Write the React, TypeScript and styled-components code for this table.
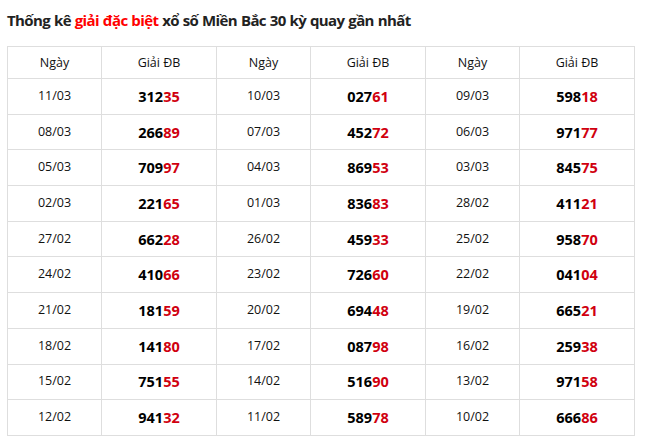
import React from "react";
import styled, { createGlobalStyle } from "styled-components";

const GlobalStyle = createGlobalStyle`
    html, body {
        margin: 0;
        padding: 0;
        background: #fff;
    }

    body {
        font-family: "Open Sans", "Noto Sans", sans-serif;
        color: #000;
    }
`;

const Page = styled.div`
    width: 645px;
    padding: 9px 11px 0 7px;
    box-sizing: border-box;
`;

const Title = styled.h2`
    margin: 0 0 15px 0;
    font-size: 15px;
    line-height: 22px;
    font-weight: 700;
    color: #222;
    letter-spacing: -0.6px;
    word-spacing: 0.5px;

    span {
        color: #ff0000;
    }
`;

const Table = styled.table`
    width: 628px;
    border-collapse: collapse;
    table-layout: fixed;

    th,
    td {
        border: 1px solid #dedede;
        text-align: center;
        padding: 0;
    }
`;

const Col = styled.col<{ wide?: boolean }>`
    width: ${(props): string => (props.wide ? "115px" : "94px")};
`;

const HeadCell = styled.th`
    height: 31px;
    font-size: 12.5px;
    font-weight: 400;
    color: #111;
`;

const DateCell = styled.td`
    height: 32.7px;
    font-size: 12.5px;
    color: #111;

    && {
        padding-bottom: 2px;
    }
`;

const PrizeCell = styled.td`
    font-size: 14.5px;
    font-weight: 700;
    color: #000;

    span {
        color: #d0000f;
    }
`;

type Draw = { date: string; prize: string };

const draws: Draw[] = [
    { date: "11/03", prize: "31235" },
    { date: "10/03", prize: "02761" },
    { date: "09/03", prize: "59818" },
    { date: "08/03", prize: "26689" },
    { date: "07/03", prize: "45272" },
    { date: "06/03", prize: "97177" },
    { date: "05/03", prize: "70997" },
    { date: "04/03", prize: "86953" },
    { date: "03/03", prize: "84575" },
    { date: "02/03", prize: "22165" },
    { date: "01/03", prize: "83683" },
    { date: "28/02", prize: "41121" },
    { date: "27/02", prize: "66228" },
    { date: "26/02", prize: "45933" },
    { date: "25/02", prize: "95870" },
    { date: "24/02", prize: "41066" },
    { date: "23/02", prize: "72660" },
    { date: "22/02", prize: "04104" },
    { date: "21/02", prize: "18159" },
    { date: "20/02", prize: "69448" },
    { date: "19/02", prize: "66521" },
    { date: "18/02", prize: "14180" },
    { date: "17/02", prize: "08798" },
    { date: "16/02", prize: "25938" },
    { date: "15/02", prize: "75155" },
    { date: "14/02", prize: "51690" },
    { date: "13/02", prize: "97158" },
    { date: "12/02", prize: "94132" },
    { date: "11/02", prize: "58978" },
    { date: "10/02", prize: "66686" }
];

const rows: Draw[][] = [];
for (let i = 0; i < draws.length; i += 3) {
    rows.push(draws.slice(i, i + 3));
}

const App: React.FC = (): React.ReactElement => {
    return (
        <>
            <GlobalStyle />
            <Page>
                <Title>
                    Thống kê <span>giải đặc biệt</span> xổ số Miền Bắc 30 kỳ quay gần nhất
                </Title>
                <Table>
                    <colgroup>
                        <Col />
                        <Col wide />
                        <Col />
                        <Col wide />
                        <Col />
                        <Col wide />
                    </colgroup>
                    <thead>
                        <tr>
                            {[0, 1, 2].map((i) => (
                                <React.Fragment key={i}>
                                    <HeadCell>Ngày</HeadCell>
                                    <HeadCell>Giải ĐB</HeadCell>
                                </React.Fragment>
                            ))}
                        </tr>
                    </thead>
                    <tbody>
                        {rows.map((row, r) => (
                            <tr key={r}>
                                {row.map((d) => (
                                    <React.Fragment key={d.date}>
                                        <DateCell>{d.date}</DateCell>
                                        <PrizeCell>
                                            {d.prize.slice(0, 3)}
                                            <span>{d.prize.slice(3)}</span>
                                        </PrizeCell>
                                    </React.Fragment>
                                ))}
                            </tr>
                        ))}
                    </tbody>
                </Table>
            </Page>
        </>
    );
};

export default App;
